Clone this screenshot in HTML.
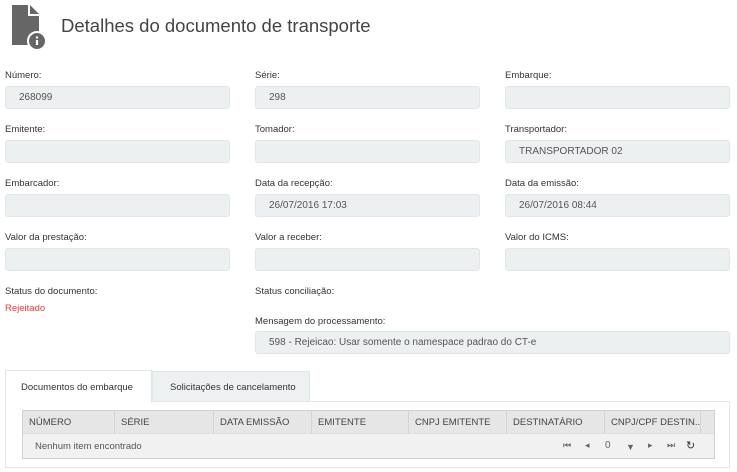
<!DOCTYPE html>
<html><head><meta charset="utf-8"><style>
*{box-sizing:border-box;margin:0;padding:0}
body{width:737px;height:472px;background:#fff;font-family:"Liberation Sans",sans-serif;color:#333;position:relative;overflow:hidden}
.a{position:absolute}
.lbl{position:absolute;font-size:9.5px;color:#333;white-space:nowrap}
.inp{position:absolute;width:225px;height:23px;background:#edf0f1;border:1px solid #e2e6e8;border-radius:3px;font-size:10px;color:#555;padding:5px 0 0 13px;white-space:nowrap}
.th{position:absolute;top:0;height:23px;border-right:1px solid #d4d4d4;font-size:9.5px;color:#444;padding:6px 0 0 6px;white-space:nowrap;overflow:hidden}
</style></head><body>
<svg class="a" style="left:10px;top:4px" width="40" height="46" viewBox="0 0 40 46">
<path d="M2 1H18V12H29V41H2Z" fill="#666"/>
<path d="M20 1L29 10H20Z" fill="#666"/>
<circle cx="27" cy="37" r="9" fill="#666" stroke="#fff" stroke-width="2"/>
<rect x="25.9" y="36" width="2.2" height="5" fill="#fff"/><circle cx="27" cy="33.5" r="1.2" fill="#fff"/>
</svg>
<div class="a" style="left:61px;top:15px;font-size:18.5px;color:#444">Detalhes do documento de transporte</div>

<div class="lbl" style="left:5px;top:70px">Número:</div><div class="inp" style="left:5px;top:86px">268099</div>
<div class="lbl" style="left:255px;top:70px">Série:</div><div class="inp" style="left:255px;top:86px">298</div>
<div class="lbl" style="left:505px;top:70px">Embarque:</div><div class="inp" style="left:505px;top:86px"></div>

<div class="lbl" style="left:5px;top:124px">Emitente:</div><div class="inp" style="left:5px;top:140px"></div>
<div class="lbl" style="left:255px;top:124px">Tomador:</div><div class="inp" style="left:255px;top:140px"></div>
<div class="lbl" style="left:505px;top:124px">Transportador:</div><div class="inp" style="left:505px;top:140px">TRANSPORTADOR 02</div>

<div class="lbl" style="left:5px;top:178px">Embarcador:</div><div class="inp" style="left:5px;top:194px"></div>
<div class="lbl" style="left:255px;top:178px">Data da recepção:</div><div class="inp" style="left:255px;top:194px">26/07/2016 17:03</div>
<div class="lbl" style="left:505px;top:178px">Data da emissão:</div><div class="inp" style="left:505px;top:194px">26/07/2016 08:44</div>

<div class="lbl" style="left:5px;top:232px">Valor da prestação:</div><div class="inp" style="left:5px;top:248px"></div>
<div class="lbl" style="left:255px;top:232px">Valor a receber:</div><div class="inp" style="left:255px;top:248px"></div>
<div class="lbl" style="left:505px;top:232px">Valor do ICMS:</div><div class="inp" style="left:505px;top:248px"></div>

<div class="lbl" style="left:5px;top:286px">Status do documento:</div>
<div class="lbl" style="left:5px;top:303px;color:#f23a3a">Rejeitado</div>
<div class="lbl" style="left:255px;top:286px">Status conciliação:</div>
<div class="lbl" style="left:255px;top:316px">Mensagem do processamento:</div>
<div class="inp" style="left:255px;top:331px;width:475px">598 - Rejeicao: Usar somente o namespace padrao do CT-e</div>

<div class="a" style="left:5px;top:401px;width:725px;height:67px;border:1px solid #e3e6e8"></div>
<div class="a" style="left:5px;top:370px;width:147px;height:33px;background:#fff;border:1px solid #e3e6e8;border-bottom:none;font-size:9.5px;padding:11px 0 0 15px;white-space:nowrap">Documentos do embarque</div>
<div class="a" style="left:152px;top:371px;width:158px;height:31px;background:#eef1f2;border:1px solid #e3e6e8;font-size:9.5px;padding:10px 0 0 17px;white-space:nowrap">Solicitações de cancelamento</div>

<div class="a" style="left:22px;top:410px;width:693px;height:49px;border:1px solid #d0d0d0;background:#f1f1f1">
<div class="a" style="left:0;top:0;width:691px;height:23px;background:#e6e6e6;border-bottom:1px solid #ddd"></div>
<div class="th" style="left:0;width:92px">NÚMERO</div>
<div class="th" style="left:92px;width:99px">SÉRIE</div>
<div class="th" style="left:191px;width:98px">DATA EMISSÃO</div>
<div class="th" style="left:289px;width:97px">EMITENTE</div>
<div class="th" style="left:386px;width:98px">CNPJ EMITENTE</div>
<div class="th" style="left:484px;width:98px">DESTINATÁRIO</div>
<div class="th" style="left:582px;width:96px">CNPJ/CPF DESTIN...</div>
<div class="a" style="left:12px;top:30px;font-size:9.5px;color:#555">Nenhum item encontrado</div>
<div class="a" style="left:540px;top:29px;font-size:9px;color:#666">
<span style="position:absolute;left:0">⏮</span><span style="position:absolute;left:22px">◂</span><span style="position:absolute;left:42px;font-size:10px">0</span><span style="position:absolute;left:63px;top:2px">▼</span><span style="position:absolute;left:85px">▸</span><span style="position:absolute;left:104px">⏭</span><span style="position:absolute;left:123px;font-size:11px;top:-1px;color:#333">↻</span>
</div>
</div>
</body></html>
